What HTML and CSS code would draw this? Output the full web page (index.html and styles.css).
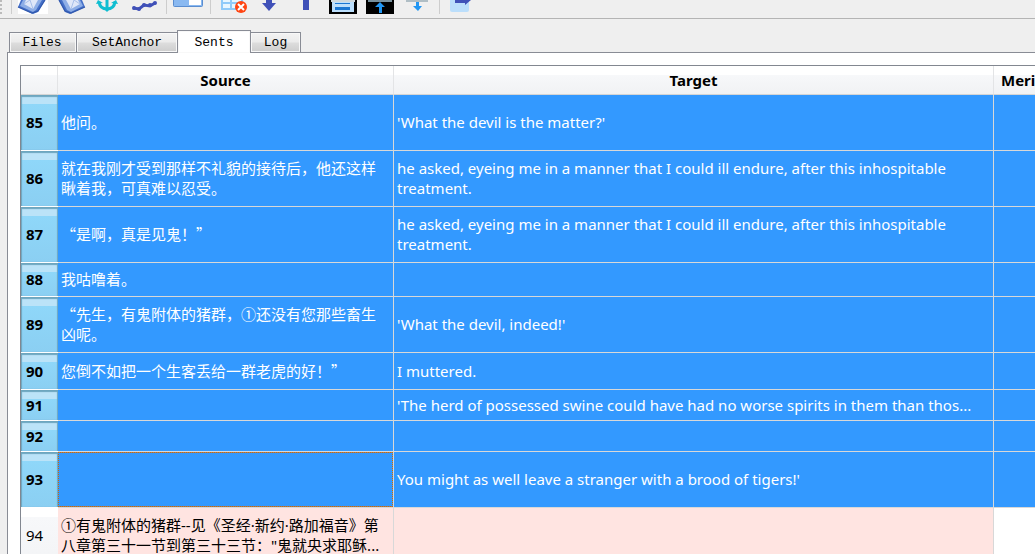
FILE: index.html
```html
<!DOCTYPE html>
<html lang="zh-CN">
<head>
<meta charset="utf-8">
<title>Sents</title>
<link rel="stylesheet" href="styles.css">
</head>
<body>
<div class="toolbar" role="toolbar">
  <span class="grip"></span>
  <span class="separator"></span>
  <button class="tool" aria-label="Open source"><svg viewBox="0 0 37 14"><path fill="#fff" d="M4 0h30v14H4z"/><path fill="#4670c8" d="M7 0L4 7l15 7 5-2 7-12z"/><path fill="#8eaee6" d="M9 0L6 6l13 6 3-2 6-10z"/><path fill="#dfe7f8" d="M12 0l-2 4 9 5 5-9z"/><path fill="none" stroke="#3159ae" stroke-width="1.300" d="M4 7l14 6 6-2 7-11"/><path fill="none" stroke="#a9bfe9" d="M10 4l6-4M19 9l-3-9"/></svg></button>
  <button class="tool" aria-label="Open target"><svg viewBox="0 0 37 14"><path fill="#4670c8" d="M8 0l6 12 5 2 15-7-3-7z"/><path fill="#8eaee6" d="M11 0l5 10 4 2 12-6-3-6z"/><path fill="#dfe7f8" d="M15 0l5 9 9-5-2-4z"/><path fill="none" stroke="#3159ae" stroke-width="1.300" d="M8 0l6 11 6 2 14-6"/><path fill="none" stroke="#a9bfe9" d="M20 9l3-9M29 4l-6-4"/></svg></button>
  <button class="tool" aria-label="Set anchor"><svg viewBox="0 0 37 14"><path fill="none" stroke="#10bed1" stroke-width="3" d="M19 0v9M11 2q1 7 8 7t8-7"/><path fill="#10bed1" d="M8 4l2-4 5 3zM30 4l-2-4-5 3zM15 8h8l-4 4z"/></svg></button>
  <button class="tool" aria-label="Show trend"><svg viewBox="0 0 37 14"><path fill="none" stroke="#4051b8" stroke-width="3" d="M8 8l6 1 5-4 6 1 5-3"/><g fill="#4051b8"><circle cx="9" cy="8" r="2"/><circle cx="14" cy="9" r="2"/><circle cx="19" cy="5" r="2"/><circle cx="25" cy="5" r="2"/><circle cx="30" cy="3" r="2"/></g></svg></button>
  <span class="separator"></span>
  <button class="tool" aria-label="Split view"><svg viewBox="0 0 37 14"><rect x="4.500" y="-6.500" width="29" height="13" rx="1" fill="#8ab9f1" stroke="#5a8dd0"/><path fill="#fff" d="M20 0h12v5H20z"/></svg></button>
  <span class="separator"></span>
  <button class="tool" aria-label="Delete row"><svg viewBox="0 0 37 14"><path fill="#e8f6ff" stroke="#90caf9" stroke-width="2" d="M9-2h20V9H9zM9 3h20M18-2V9"/><circle cx="28" cy="7" r="6" fill="#ff4512"/><path stroke="#fff" stroke-width="2" d="M25 4l6 6M31 4l-6 6"/></svg></button>
  <button class="tool" aria-label="Move down"><svg viewBox="0 0 37 14"><path fill="#4051b8" d="M16 0h6v3h4l-7 8-7-8h4z"/></svg></button>
  <button class="tool" aria-label="Move up"><svg viewBox="0 0 37 14"><path fill="#4051b8" d="M16 0h6v10h-6z"/></svg></button>
  <button class="tool" aria-label="Merge rows"><svg viewBox="0 0 37 14"><path d="M5 0h28v14H5z"/><path fill="#cfd8dc" d="M7 0h24v2H7z"/><path fill="#bbdefb" d="M8 2h22v10H8z"/><path fill="#1976d2" d="M11 3h15v1H11zM11 7h15v3H11z"/></svg></button>
  <button class="tool" aria-label="Insert above"><svg viewBox="0 0 37 14"><path d="M5 0h28v14H5z"/><path fill="#78909c" d="M7 0h24v2H7z"/><path fill="#2196f3" d="M19 2l5 5h-3v6h-3V7h-4z"/></svg></button>
  <button class="tool" aria-label="Insert below"><svg viewBox="0 0 37 14"><path fill="#b0bec5" d="M8 0h22v2H8z"/><path fill="#2196f3" d="M18 2h3v4h3l-4 5-5-5h3z"/></svg></button>
  <span class="separator"></span>
  <button class="tool" aria-label="Export"><svg viewBox="0 0 37 14"><path fill="#bbdefb" d="M8 0h19v10q0 2-2 2H10q-2 0-2-2z"/><path fill="#4051b8" d="M13 0h16l-6 5V3H13z"/></svg></button>
</div>

<main class="workspace">
  <div class="tabs" role="tablist">
    <button class="tab tab-files" role="tab">Files</button>
    <button class="tab tab-anchor" role="tab">SetAnchor</button>
    <button class="tab tab-sents active" role="tab" aria-selected="true">Sents</button>
    <button class="tab tab-log" role="tab">Log</button>
  </div>
  <section class="pane" role="tabpanel">
    <div class="grid">
      <table class="sents">
        <colgroup><col class="col-num"><col class="col-source"><col class="col-target"><col class="col-merit"></colgroup>
        <thead>
          <tr><th></th><th>Source</th><th>Target</th><th class="merit">Meri</th></tr>
        </thead>
        <tbody>
          <tr class="tall"><th>85</th><td class="zh">他问。</td><td>'What the devil is the matter?'</td><td></td></tr>
          <tr class="tall"><th>86</th><td class="zh">就在我刚才受到那样不礼貌的接待后，他还这样<br>瞅着我，可真难以忍受。</td><td>he asked, eyeing me in a manner that I could ill endure, after this inhospitable<br>treatment.</td><td></td></tr>
          <tr class="tall"><th>87</th><td class="zh">“是啊，真是见鬼！”</td><td>he asked, eyeing me in a manner that I could ill endure, after this inhospitable<br>treatment.</td><td></td></tr>
          <tr class="medium"><th>88</th><td class="zh">我咕噜着。</td><td></td><td></td></tr>
          <tr class="tall"><th>89</th><td class="zh">“先生，有鬼附体的猪群，①还没有您那些畜生<br>凶呢。</td><td>'What the devil, indeed!'</td><td></td></tr>
          <tr class="large"><th>90</th><td class="zh">您倒不如把一个生客丢给一群老虎的好！”</td><td>I muttered.</td><td></td></tr>
          <tr class="short"><th>91</th><td></td><td>'The herd of possessed swine could have had no worse spirits in them than thos...</td><td></td></tr>
          <tr class="short"><th>92</th><td></td><td></td><td></td></tr>
          <tr class="tall"><th>93</th><td class="focused"></td><td>You might as well leave a stranger with a brood of tigers!'</td><td></td></tr>
          <tr class="tall plain"><th>94</th><td class="zh mixed">①有鬼附体的猪群--见《圣经·新约·路加福音》第<br>八章第三十一节到第三十三节："鬼就央求耶稣...</td><td></td><td class="blank"></td></tr>
        </tbody>
      </table>
    </div>
  </section>
</main>
</body>
</html>
```
FILE: styles.css
```css
* { box-sizing: border-box; }

body {
  margin: 0;
  height: 100vh;
  overflow: hidden;
  display: flex;
  flex-direction: column;
  background: #efefef;
  color: #000;
  font-family: "Noto Sans", "Noto Sans CJK SC", sans-serif;
  font-size: 15px;
}

button {
  border: 0;
  padding: 0;
  background: none;
  color: inherit;
}

.toolbar {
  display: flex;
  flex: none;
  height: 19px;
  border-bottom: 1px solid #b4b4b4;
}

.grip {
  width: 7px;
  height: 14px;
  background: repeating-linear-gradient(#bbb 0 2px, #efefef 2px 4px) no-repeat left / 2px 100%;
}

.separator {
  width: 7px;
  height: 14px;
  background: linear-gradient(#cdcdcd, #cdcdcd) no-repeat 4px 0 / 1px 100%;
}

.tool { width: 37px; height: 14px; }
.tool svg { display: block; width: 37px; height: 14px; }

.workspace {
  flex: 1;
  min-height: 0;
  display: flex;
  flex-direction: column;
  padding: 11px 0 0 7px;
}

.tabs {
  display: flex;
  flex: none;
  align-items: flex-end;
  padding-left: 2px;
  height: 23px;
  margin-bottom: -1px;
  z-index: 1;
}

.tab {
  height: 21px;
  border: 1px solid #898c95;
  border-left-width: 0;
  background: linear-gradient(#f3f3f3, #ebebeb 48%, #dddddd 52%, #cdcdcd);
  box-shadow: inset 0 0 0 1px #f8f8f8;
  font-family: "Liberation Mono", monospace;
  font-size: 13px;
  line-height: 19px;
}

.tab-files { width: 68px; border-left-width: 1px; padding-right: 2px; }
.tab-anchor { width: 101px; }
.tab-sents { width: 74px; }
.tab-log { width: 50px; }

.tab.active {
  height: 23px;
  border-left-width: 1px;
  border-bottom: 0;
  margin-left: -1px;
  background: #fff;
}

.pane {
  flex: 1;
  min-height: 0;
  overflow: hidden;
  padding: 12px 0 0 12px;
  background: #fff;
  border: solid #898c95;
  border-width: 1px 0 0 1px;
}

.grid {
  height: 100%;
  overflow: hidden;
  border: solid #828790;
  border-width: 1px 0 0 1px;
}

.sents {
  width: calc(100% + 60px);
  table-layout: fixed;
  border-collapse: separate;
  border-spacing: 0;
}

.col-num { width: 37px; }
.col-source { width: 336px; }
.col-target { width: 600px; }

.sents th,
.sents td {
  padding: 0 3px;
  border: solid #d8d8d8;
  border-width: 0 1px 1px 0;
  line-height: 20px;
  text-align: left;
  white-space: nowrap;
}

.sents thead th {
  height: 29px;
  background: linear-gradient(#fff 0 9px, #f7f8fa 9px, #f1f2f4);
  border-right-color: #e3e4e6;
  border-bottom-color: #d5d5d5;
  text-align: center;
}

.sents thead .merit { padding-left: 7px; text-align: left; }

.sents tbody th {
  padding-left: 5px;
  border-right: 0;
  border-bottom-color: #fff;
  background: linear-gradient(#bbe3f8 0 9px, #8fd7f9 9px, #8bcff2);
  box-shadow: inset 1px 2px 1px #6da6bf, inset -1px 0 1px #6da6bf;
}

.sents tbody td {
  background: #39f;
  color: #fff;
}

.sents .zh { font-family: "Noto Sans CJK SC", sans-serif; }
.sents .mixed { font-family: "Noto Sans", "Noto Sans CJK SC", sans-serif; }

.sents .tall > *,
.sents .medium > * { padding-bottom: 2px; }

.tall { height: 56px; }
.large { height: 37px; }
.medium { height: 34px; }
.short { height: 31px; }

.sents tbody .focused {
  --dots-x: repeating-linear-gradient(90deg, #d46a00 0 1px, #8a8080 1px 2px);
  --dots-y: repeating-linear-gradient(#d46a00 0 1px, #39f 1px 2px);
  padding: 0 1px;
  background:
    var(--dots-x) top / 100% 1px no-repeat content-box,
    var(--dots-x) bottom / 100% 1px no-repeat content-box,
    var(--dots-y) left / 1px 100% no-repeat content-box,
    var(--dots-y) right / 1px 100% no-repeat content-box,
    #39f;
  background-origin: padding-box;
  background-clip: padding-box;
}

.sents .plain th {
  background: linear-gradient(#fff 0 9px, #f7f8fa 9px, #f3f4f6);
  box-shadow: none;
  font-weight: normal;
}

.sents .plain td { background: #ffe4e1; color: #000; }
.sents .plain .blank { background: #fff; }
```
